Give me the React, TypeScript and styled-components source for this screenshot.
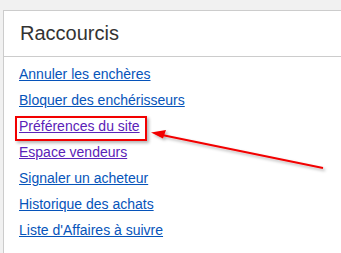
import React from 'react'
import styled, { createGlobalStyle } from 'styled-components'

const Global = createGlobalStyle`
    html, body {
        margin: 0;
        padding: 0;
        overflow: hidden;
    }
    body {
        background: #f1f1f1;
        font-family: Arial, "Liberation Sans", sans-serif;
        width: 341px;
        height: 253px;
    }
`

const Page = styled.div`
    position: relative;
    padding: 10px 0 0 3px;
    height: 253px;
    box-sizing: border-box;
`

const Card = styled.div`
    background: #fff;
    border: 1px solid #cccccc;
    border-right: none;
    border-bottom: none;
    height: 100%;
`

const Title = styled.div`
    height: 45px;
    line-height: 45px;
    padding-left: 16px;
    font-size: 20px;
    color: #333333;
    border-bottom: 1px solid #cccccc;
`

const List = styled.ul`
    list-style: none;
    margin: 0;
    padding: 4px 0 0 15px;
`

const Item = styled.li`
    position: relative;
    height: 26px;
    line-height: 26px;
    font-size: 14px;
`

const Link = styled.a<{ visited?: boolean }>`
    color: ${(p) => (p.visited ? '#5a22b8' : '#0654ba')};
    text-decoration: underline;
`

const Highlight = styled.span`
    position: absolute;
    left: -4px;
    top: 3px;
    width: 132px;
    height: 25px;
    box-sizing: border-box;
    border: 2px solid #f20000;
    box-shadow: 2px 2px 3px rgba(0, 0, 0, 0.3);
    pointer-events: none;
`

const Arrow = styled.svg`
    position: absolute;
    left: 0;
    top: 0;
    pointer-events: none;
`

const links = [
    { label: 'Annuler les enchères' },
    { label: 'Bloquer des enchérisseurs' },
    { label: 'Préférences du site', visited: true, marked: true },
    { label: 'Espace vendeurs', visited: true },
    { label: 'Signaler un acheteur' },
    { label: 'Historique des achats' },
    { label: "Liste d'Affaires à suivre" },
]

export default function App() {
    return (
        <>
            <Global />
            <Page>
                <Card>
                    <Title>Raccourcis</Title>
                    <List>
                        {links.map((l) => (
                            <Item key={l.label}>
                                <Link href="#" visited={l.visited}>
                                    {l.label}
                                </Link>
                                {l.marked && <Highlight />}
                            </Item>
                        ))}
                    </List>
                </Card>
                <Arrow width="341" height="253" viewBox="0 0 341 253">
                    <defs>
                        <filter id="sh" x="-10%" y="-50%" width="120%" height="200%">
                            <feDropShadow dx="2" dy="2" stdDeviation="1.5" floodColor="#000" floodOpacity="0.3" />
                        </filter>
                    </defs>
                    <g filter="url(#sh)">
                        <line x1="323" y1="168" x2="162" y2="135" stroke="#f20000" strokeWidth="2" />
                        <polygon points="151,132.5 166,130 163,138.5" fill="#f20000" />
                    </g>
                </Arrow>
            </Page>
        </>
    )
}
